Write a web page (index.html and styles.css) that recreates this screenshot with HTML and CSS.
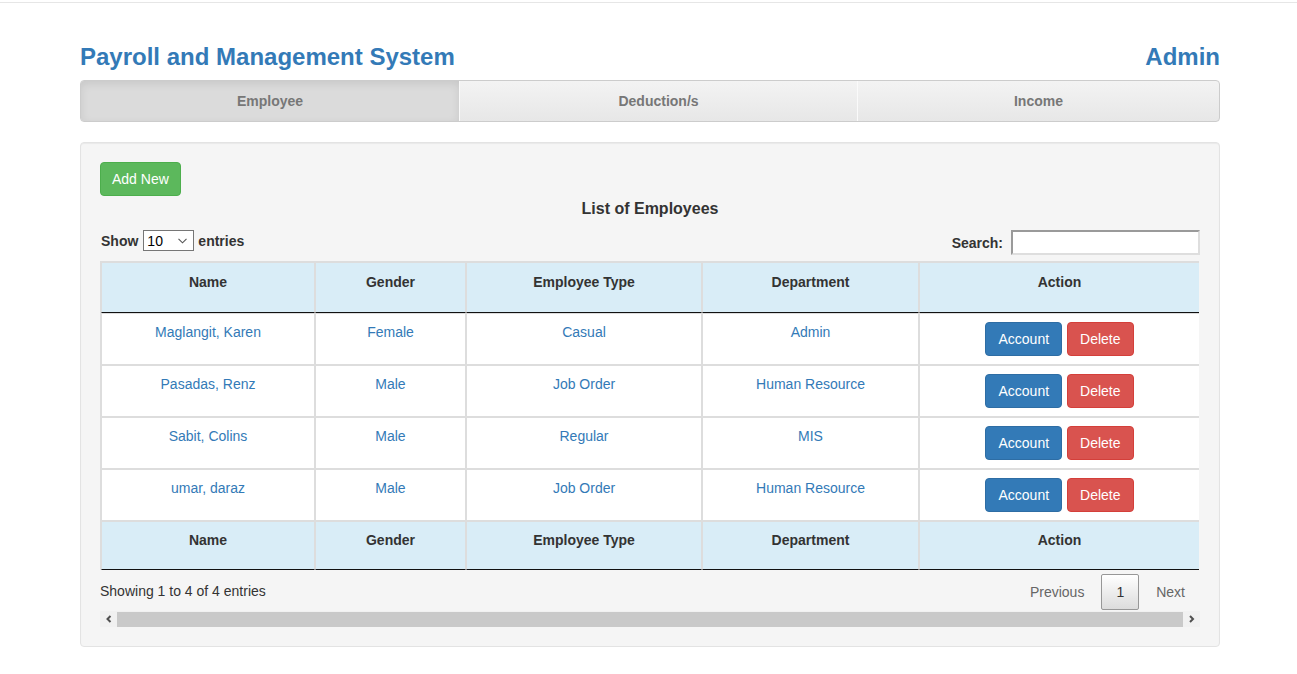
FILE: index.html
```html
<!DOCTYPE html>
<html>
<head>
<meta charset="utf-8">
<title>Payroll and Management System</title>
<link rel="stylesheet" href="styles.css">
</head>
<body>
<div class="topline"></div>
<div class="container">
  <div class="header">
    <h1 class="brand">Payroll and Management System</h1>
    <div class="user">Admin</div>
  </div>
  <nav class="tabs">
    <div class="tab active">Employee</div>
    <div class="tab">Deduction/s</div>
    <div class="tab">Income</div>
  </nav>
  <div class="well">
    <div><span class="btn btn-green">Add New</span></div>
    <h4 class="list-title">List of Employees</h4>
    <div class="toolbar">
      <div class="length"><b>Show</b><span class="sel"><span class="sel-val">10</span><svg class="sel-arrow" width="9" height="6" viewBox="0 0 9 6"><path d="M0.5 0.8 L4.5 4.8 L8.5 0.8" fill="none" stroke="#555" stroke-width="1.1"/></svg></span><b>entries</b></div>
      <div class="search"><b>Search:</b><input class="search-input" type="text"></div>
    </div>
    <div class="tbl-wrap">
      <table class="tbl">
        <colgroup>
          <col class="c1"><col class="c2"><col class="c3"><col class="c4"><col class="c5">
        </colgroup>
        <thead>
          <tr><th>Name</th><th>Gender</th><th>Employee Type</th><th>Department</th><th>Action</th></tr>
        </thead>
        <tbody>
          <tr><td><a>Maglangit, Karen</a></td><td><a>Female</a></td><td><a>Casual</a></td><td><a>Admin</a></td><td><div class="actions"><span class="btn btn-blue">Account</span><span class="btn btn-red">Delete</span></div></td></tr>
          <tr><td><a>Pasadas, Renz</a></td><td><a>Male</a></td><td><a>Job Order</a></td><td><a>Human Resource</a></td><td><div class="actions"><span class="btn btn-blue">Account</span><span class="btn btn-red">Delete</span></div></td></tr>
          <tr><td><a>Sabit, Colins</a></td><td><a>Male</a></td><td><a>Regular</a></td><td><a>MIS</a></td><td><div class="actions"><span class="btn btn-blue">Account</span><span class="btn btn-red">Delete</span></div></td></tr>
          <tr><td><a>umar, daraz</a></td><td><a>Male</a></td><td><a>Job Order</a></td><td><a>Human Resource</a></td><td><div class="actions"><span class="btn btn-blue">Account</span><span class="btn btn-red">Delete</span></div></td></tr>
        </tbody>
        <tfoot>
          <tr><th>Name</th><th>Gender</th><th>Employee Type</th><th>Department</th><th>Action</th></tr>
        </tfoot>
      </table>
    </div>
    <div class="dt-bottom">
      <div class="info">Showing 1 to 4 of 4 entries</div>
      <div class="paginate">
        <span class="pbtn">Previous</span><span class="pbtn current">1</span><span class="pbtn">Next</span>
      </div>
    </div>
    <div class="hscroll">
      <div class="sarrow"><svg width="17" height="16" viewBox="0 0 17 16"><path d="M10.5 5 L7.5 8 L10.5 11" fill="none" stroke="#505050" stroke-width="2"/></svg></div>
      <div class="thumb"></div>
      <div class="sarrow"><svg width="17" height="16" viewBox="0 0 17 16"><path d="M7 5 L10 8 L7 11" fill="none" stroke="#505050" stroke-width="2"/></svg></div>
    </div>
  </div>
</div>
</body>
</html>
```
FILE: styles.css
```css
body {
  margin: 0;
  font-family: "Liberation Sans", Arial, sans-serif;
  font-size: 14px;
  line-height: 20px;
  color: #333;
  background: #fff;
}
.topline {
  height: 2px;
  border-bottom: 1px solid #e6e6e6;
}
.container {
  width: 1140px;
  margin-left: 80px;
  padding-top: 41px;
}
.header {
  display: flex;
  justify-content: space-between;
  height: 26px;
  line-height: 26px;
  font-size: 24px;
  font-weight: bold;
  color: #337ab7;
}
.brand {
  margin: 0;
  font: inherit;
}
.tabs {
  margin-top: 10px;
  display: grid;
  grid-template-columns: 378px 398px 1fr;
  height: 42px;
  box-sizing: border-box;
  border: 1px solid #ccc;
  border-radius: 4px;
  overflow: hidden;
  background: linear-gradient(#f3f3f3, #e7e7e7);
}
.tab {
  display: flex;
  align-items: center;
  justify-content: center;
  font-weight: bold;
  color: #777;
}
.tab + .tab {
  border-left: 1px solid #fafafa;
}
.tab.active {
  background: #dbdbdb;
  box-shadow: inset 0 3px 9px rgba(0, 0, 0, 0.09);
}
.well {
  margin-top: 20px;
  background: #f5f5f5;
  border: 1px solid #e3e3e3;
  border-radius: 4px;
  padding: 19px;
  box-shadow: inset 0 1px 1px rgba(0, 0, 0, 0.05);
}
.btn {
  display: inline-block;
  box-sizing: border-box;
  height: 34px;
  padding: 6px 12px;
  border: 1px solid transparent;
  border-radius: 4px;
  color: #fff;
  font-size: 14px;
  line-height: 20px;
}
.btn-green { background: #5cb85c; border-color: #4cae4c; padding: 6px 11px; }
.btn-blue { background: #337ab7; border-color: #2e6da4; }
.btn-red { background: #d9534f; border-color: #d43f3a; }
.list-title {
  margin: 2px 0 0;
  font-size: 16px;
  line-height: 22px;
  font-weight: bold;
  text-align: center;
}
.toolbar {
  margin-top: 10px;
  display: flex;
  justify-content: space-between;
  align-items: flex-start;
  padding-left: 1px;
}
.length {
  display: flex;
  align-items: center;
  height: 21px;
}
.sel {
  display: flex;
  align-items: center;
  justify-content: space-between;
  box-sizing: border-box;
  width: 51px;
  height: 21px;
  margin: 0 4px 0 5px;
  padding: 0 6px 0 3px;
  border: 1px solid #767676;
  background: #fff;
  color: #000;
  font-size: 14px;
}
.sel-arrow {
  display: block;
}
.search {
  display: flex;
  align-items: center;
  height: 25px;
}
.search-input {
  width: 189px;
  height: 25px;
  box-sizing: border-box;
  margin: 0 0 0 8px;
  border-style: solid;
  border-width: 2px;
  border-color: #9a9a9a #dedede #dedede #9a9a9a;
  background: #fff;
  padding: 1px 2px;
}
.tbl-wrap {
  margin-top: 6px;
  overflow: hidden;
}
.tbl {
  width: 1099px;
  table-layout: fixed;
  border-collapse: separate;
  border-spacing: 0;
  border-left: 1px solid #ddd;
  border-top: 1px solid #ddd;
}
.c1 { width: 214px; }
.c2 { width: 151px; }
.c3 { width: 236px; }
.c4 { width: 217px; }
.c5 { width: 280px; }
.tbl th, .tbl td {
  border: 1px solid #ddd;
  text-align: center;
  line-height: 20px;
}
.tbl th:last-child, .tbl td:last-child {
  border-right: 0;
}
.tbl thead th {
  background: #d9edf7;
  padding: 9px 18px 20px;
  border-bottom-color: #111;
  font-weight: bold;
}
.tbl tfoot th {
  background: #d9edf7;
  padding: 8px 18px 19px;
  border-bottom-color: #111;
  font-weight: bold;
}
.tbl td {
  background: #fff;
  padding: 8px 10px;
  vertical-align: top;
}
.tbl td a {
  color: #337ab7;
}
.actions {
  display: flex;
  justify-content: center;
  gap: 5px;
}
.dt-bottom {
  display: flex;
  justify-content: space-between;
  align-items: flex-start;
  height: 41px;
}
.info {
  padding-top: 11px;
}
.paginate {
  padding-top: 4px;
  display: flex;
}
.pbtn {
  display: block;
  padding: 7px 14px;
  line-height: 20px;
  border: 1px solid transparent;
  border-radius: 2px;
  margin-left: 2px;
  color: #666;
}
.pbtn.current {
  color: #333;
  border-color: #979797;
  background: linear-gradient(#fff, #dcdcdc);
}
.hscroll {
  display: flex;
  height: 16px;
  background: #f1f1f1;
}
.sarrow {
  width: 17px;
  height: 16px;
}
.sarrow svg {
  display: block;
}
.thumb {
  flex: 1;
  margin-top: 1px;
  background: #c9c9c9;
}
```
